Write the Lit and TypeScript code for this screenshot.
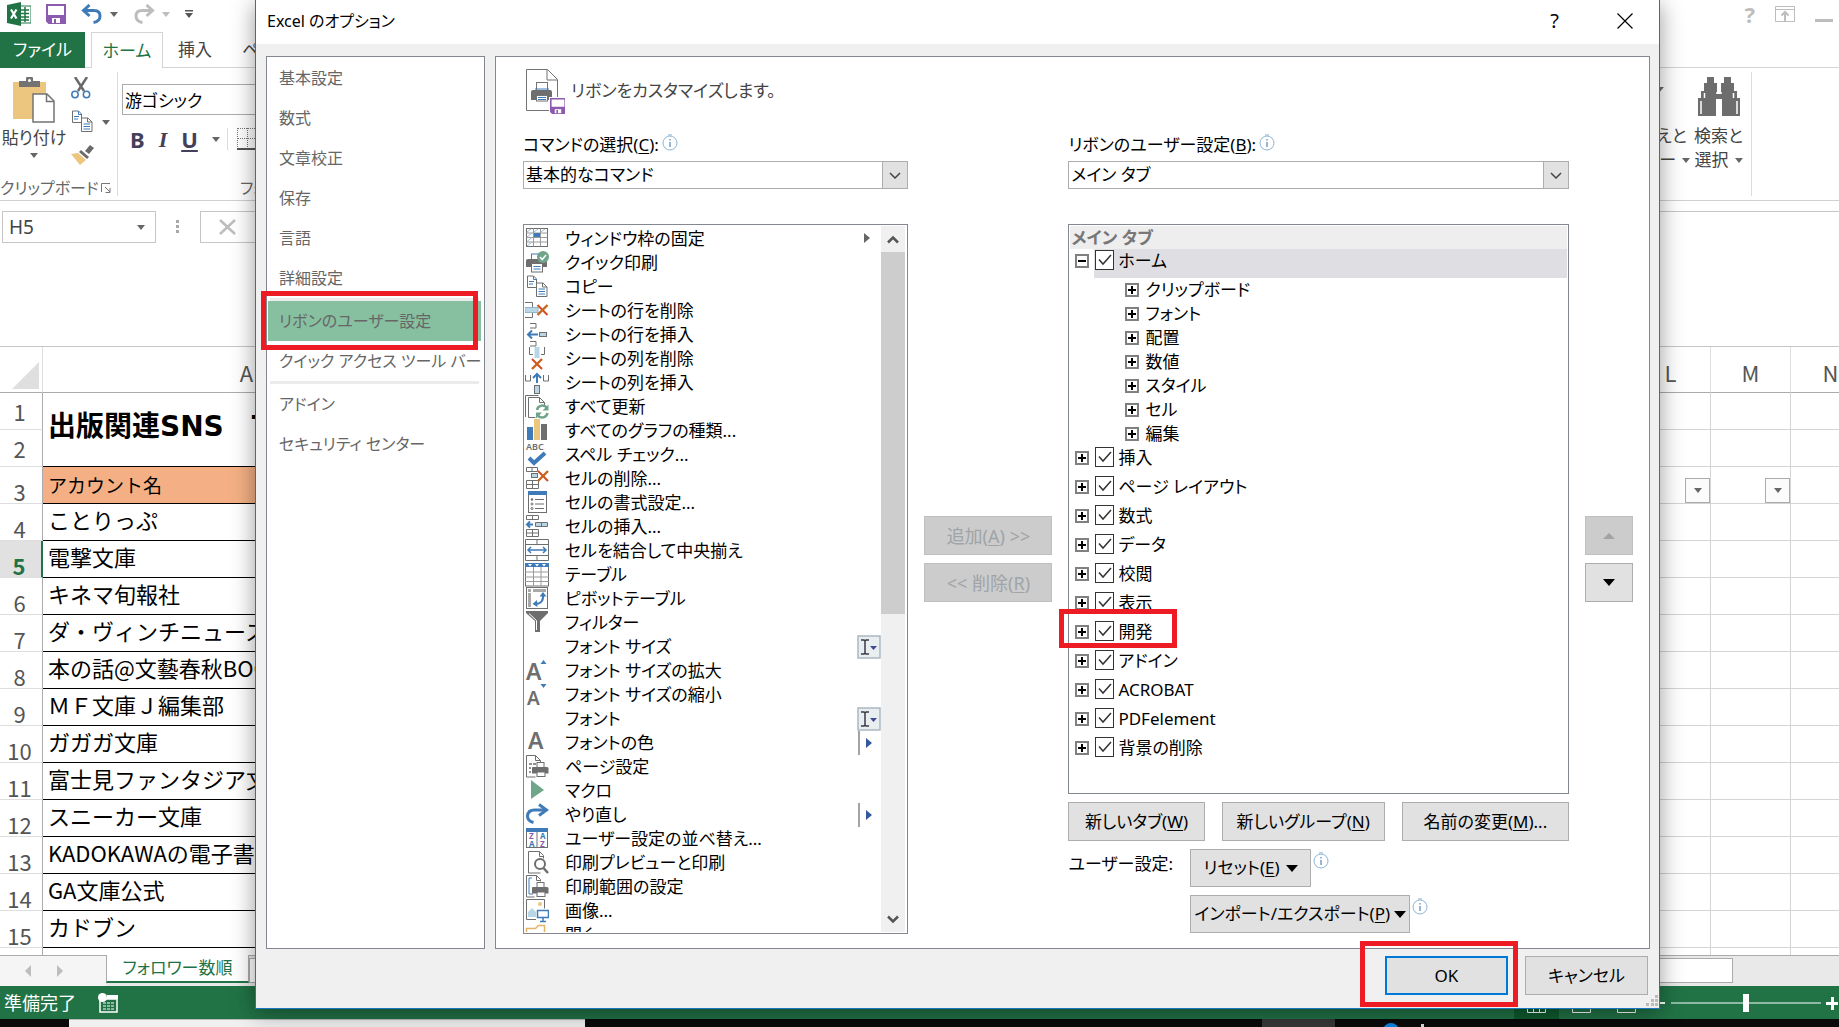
import { LitElement, html, svg, css, nothing } from "lit";
import { customElement } from "lit/decorators.js";
import { classMap } from "lit/directives/class-map.js";

const G = "#6e6e6e";
const B = "#3f7bb8";
const L = "#b9d6e6";
const GREEN = "#6fa58b";

const cross = (x: number, y: number) => svg`
  <path d="M${x} ${y}l10 10" stroke="#d9481c" stroke-width="2" fill="none"/>
  <path d="M${x + 10} ${y}l-10 10" stroke="#c9641c" stroke-width="2.4" fill="none"/>`;

const miniPrinter = svg`
  <rect x="12" y="7.500" width="7" height="5" fill="#fff" stroke="${G}"/>
  <path d="M7 13q0-1 1-1h14q1.500 0 1.500 1.500V18.500H7z" fill="${G}"/>
  <rect x="12" y="17" width="8" height="4.500" fill="#fff" stroke="${G}"/>`;

const twoPages = svg`
  <path d="M2.500 1h6l3 3v8.500h-9z" fill="#fff" stroke="${G}"/>
  <path d="M8.500 1v3.500h3M4 6.500h5M4 9h4" fill="none" stroke="${B}"/>
  <path d="M11.500 8h6.500l4 4v9.500h-10.500z" fill="#fff" stroke="${G}"/>
  <path d="M17.500 8v4h4.500" fill="none" stroke="${G}"/>
  <path d="M13.500 14h6.500M13.500 16.500h6.500M13.500 19h6.500" stroke="${B}"/>`;

const floppy = svg`
  <path d="M1 1h18v18H3l-2-2z" fill="#fff" stroke="#8c5bb0" stroke-width="2"/>
  <path d="M1 11h18v8H3l-2-2z" fill="#8c5bb0"/>
  <rect x="6" y="14" width="8" height="5" fill="#fff"/><rect x="8" y="15" width="2" height="4" fill="#8c5bb0"/>`;

const cmdIcons: Record<string, unknown> = {
  freeze: svg`
    <rect x="1.500" y="1.500" width="21" height="18" fill="#fff" stroke="${G}"/>
    <path d="M1.500 6h21M1.500 10.500h21M1.500 15h21M8.500 1.500v18M15.500 1.500v18" stroke="#9a9a9a"/>
    <path d="M2 5l4-3M9 5l4-3M16 5l4-3M2 10l5-4M2 14.500l5-4M2 19l5-4" stroke="#9ebfd8"/>
    <rect x="9" y="6" width="6" height="4" fill="${B}"/>`,
  quick: svg`
    <rect x="6.500" y="3" width="9" height="6" fill="#fff" stroke="${B}"/>
    <path d="M1 10q0-2 2-2h17q2 0 2 2v6H1z" fill="${G}"/>
    <rect x="6.500" y="12.500" width="11" height="8.500" fill="#fff" stroke="${G}"/>
    <path d="M8.500 15.500h7M8.500 18h7" stroke="${B}"/>
    <circle cx="18" cy="6" r="6" fill="${GREEN}"/><path d="M15 6l2.200 2.500L21 4" fill="none" stroke="#fff" stroke-width="1.500"/>`,
  copy: twoPages,
  rowDel: svg`<path d="M0 3.500h7.500V8M0 18.500h7.500V14" fill="none" stroke="${G}"/>
    <rect x="0" y="8.500" width="13" height="5" fill="${L}" stroke="#8fb6cc"/>${cross(12.5, 6)}`,
  rowIns: svg`<path d="M5 .500h6v4.500H5M5 18.500h6V23H5" fill="none" stroke="${G}"/>
    <path d="M3 11.500h10M7 7.500l-4 4 4 4" fill="none" stroke="${B}" stroke-width="2"/>
    <rect x="14.500" y="9.500" width="7" height="4" fill="${L}" stroke="${G}"/>`,
  colDel: svg`<path d="M4.500 0v7.500H8M19.500 0v7.500H16" fill="none" stroke="${G}"/>
    <rect x="9.500" y="0" width="5" height="11" fill="${L}"/>${cross(7, 12)}`,
  colIns: svg`<path d="M.500 4v6h5V4M18.500 4v6h5V4" fill="none" stroke="${G}"/>
    <path d="M12 12V3M8 7l4-4 4 4" fill="none" stroke="${B}" stroke-width="2"/>
    <rect x="9.500" y="14.500" width="5" height="8" fill="${L}" stroke="${G}"/>`,
  refresh: svg`<path d="M.500 22V.500h13M3.500 22.500V2.500h11l5 5v4M3.500 22.500h7" fill="none" stroke="${G}"/>
    <path d="M14.500 2.500v5h5" fill="none" stroke="${G}"/>
    <path d="M12 15a5.500 5.500 0 0 1 10-2M22.500 18a5.500 5.500 0 0 1-10 2" fill="none" stroke="${GREEN}" stroke-width="2.500"/>
    <path d="M23.500 9.500v6h-6zM11 23.500v-6h6z" fill="${GREEN}"/>`,
  chart: svg`<rect x="2" y="8" width="6" height="13" fill="${B}"/><rect x="9" y="0" width="6" height="21" fill="#ecc57f"/><rect x="16" y="5" width="6" height="16" fill="${G}"/>`,
  spell: svg`<text x="1" y="7" font-size="9" font-weight="600" fill="${G}">ABC</text>
    <path d="M4 15l5 5L20 10" fill="none" stroke="${B}" stroke-width="4"/>`,
  cellDel: svg`<path d="M1.500.500h11v4h-11zM7 .500v4M1.500 13.500h12v8h-12zM7.500 13.500v8M1.500 17.500h12" fill="none" stroke="${G}"/>
    <rect x="6.500" y="6.500" width="6" height="4" fill="${L}" stroke="${G}"/>${cross(13, 4)}`,
  format: svg`<rect x="3.500" y="1" width="18" height="20.500" fill="#fff" stroke="${G}"/><rect x="3" y="0" width="19" height="4" fill="${B}"/>
    <path d="M10 8.500h9M10 13h9M10 17.500h9" stroke="${G}"/>
    <circle cx="7" cy="8.500" r="1.200" fill="${G}"/><circle cx="7" cy="13" r="1" fill="none" stroke="${G}"/><circle cx="7" cy="17.500" r="1" fill="none" stroke="${G}"/>`,
  cellIns: svg`<path d="M1.500.500h12v4h-12zM7.500.500v4M1.500 14.500h12v7h-12zM7.500 14.500v7M1.500 18h12" fill="none" stroke="${G}"/>
    <path d="M2 9.500h6M5 6.500l-3 3 3 3" fill="none" stroke="${B}" stroke-width="2"/>
    <path d="M10.500 7.500h12v4h-12zM16.500 7.500v4" fill="${L}" stroke="${G}"/>`,
  merge: svg`<path d="M.500.500h23v21H.500zM.500 5.500h23M.500 16.500h23M12 .500v5M12 16.500v5" fill="none" stroke="${G}"/>
    <path d="M3 11h18M6 8l-3 3 3 3M18 8l3 3-3 3" fill="none" stroke="${B}" stroke-width="1.500"/>`,
  table: svg`<rect x=".500" y="1" width="23" height="22" fill="#fff" stroke="${G}"/>
    <path d="M8.500 4v19M16 4v19M0 9h24M0 14h24M0 18.500h24" stroke="#9a9a9a"/><rect x="0" y="0" width="24" height="4" fill="${B}"/>
    <path d="M3 1h4l-2 2.500zM10 1h4l-2 2.500zM17 1h4l-2 2.500z" fill="#fff"/>`,
  pivot: svg`<rect x="1.500" y=".500" width="21" height="21" fill="#fff" stroke="${G}"/>
    <path d="M3 3.500h3M8 3.500h13M4.500 6v14" stroke="#a8a8a8" stroke-width="3"/>
    <path d="M10 17q9 0 8-10" fill="none" stroke="${B}" stroke-width="2"/><path d="M14.500 9.500L18 5l3.500 4.500zM12 13l-4.500 4 5 3z" fill="${B}"/>`,
  filter: svg`<path d="M1 0h22v2l-8 8v11H10V10L1 2z" fill="${G}"/><path d="M4 2.500l7.500 7V19" fill="none" stroke="#fff"/>`,
  grow: svg`<text x="1" y="21" font-size="23" font-weight="600" fill="${G}">A</text><path d="M15.500 5l3-4 3 4z" fill="${B}"/>`,
  shrink: svg`<text x="2" y="22" font-size="19" font-weight="600" fill="${G}">A</text><path d="M15.500 1h6l-3 4z" fill="${B}"/>`,
  fcolor: svg`<text x="3" y="18" font-size="23" font-weight="600" fill="${G}">A</text>`,
  page: svg`<path d="M1.500 22V.500h9l5 5v2M1.500 22h9M10.500.500v5h5" fill="none" stroke="${G}"/>
    <path d="M4 9h3M8 9h3M4 13h2M4 17h2" stroke="${G}" stroke-width="1.500"/>${miniPrinter}`,
  macro: svg`<path d="M6 1l13 10L6 20z" fill="${GREEN}"/>`,
  redo: svg`<path d="M20 7H9.500Q3 7 2.500 13q0 5 6 6.500" fill="none" stroke="${B}" stroke-width="3"/><path d="M14 1.500l7.500 5.500L14 12.500" fill="none" stroke="${B}" stroke-width="3"/>`,
  sort: svg`<rect x="1.500" y="2" width="21" height="18.500" fill="#fff" stroke="${G}"/><rect x="1" y="1" width="22" height="4" fill="${B}"/><path d="M12 5v15" stroke="${G}"/>
    <g font-size="8" font-weight="700"><text x="4" y="12" fill="#8c5bb0">Z</text><text x="4" y="19.500" fill="${B}">A</text><text x="15" y="12" fill="${B}">A</text><text x="15" y="19.500" fill="#8c5bb0">Z</text></g>`,
  preview: svg`<path d="M3.500 22V.500h11l4 4v3M3.500 22h12M14.500.500v5h4" fill="none" stroke="${G}"/>
    <circle cx="15" cy="13" r="5" fill="#fff" stroke="${G}" stroke-width="2"/><path d="M18.500 17l4.500 5" stroke="${G}" stroke-width="2.500"/>`,
  area: svg`<path d="M1.500 22V.500h10l4 4v2M1.500 22h8M11.500.500v5h4" fill="none" stroke="${G}"/><path d="M7 3H4v16h4" fill="none" stroke="${B}"/>${miniPrinter}`,
  image: svg`<path d="M11 20.500H1.500V.500h18v9" fill="none" stroke="${G}"/><circle cx="15" cy="5" r="2" fill="#ecc57f"/><path d="M3 18v-5l4-4 4 4v5z" fill="${L}"/>
    <rect x="12.500" y="11.500" width="11" height="7" fill="#fff" stroke="${B}" stroke-width="1.500"/><path d="M18 19v3M15 22.500h6" stroke="${B}" stroke-width="1.500"/>`,
  open: svg`<path d="M1.500 24V5.500h9l3-3h6V24" fill="none" stroke="#e3b566" stroke-width="1.500"/>`,
};

const commands: [string, string, string?][] = [
  ["freeze", "ウィンドウ枠の固定", "sub"], ["quick", "クイック印刷"], ["copy", "コピー"],
  ["rowDel", "シートの行を削除"], ["rowIns", "シートの行を挿入"], ["colDel", "シートの列を削除"], ["colIns", "シートの列を挿入"],
  ["refresh", "すべて更新"], ["chart", "すべてのグラフの種類..."], ["spell", "スペル チェック..."],
  ["cellDel", "セルの削除..."], ["format", "セルの書式設定..."], ["cellIns", "セルの挿入..."],
  ["merge", "セルを結合して中央揃え"], ["table", "テーブル"], ["pivot", "ピボットテーブル"], ["filter", "フィルター"],
  ["", "フォント サイズ", "edit"], ["grow", "フォント サイズの拡大"], ["shrink", "フォント サイズの縮小"],
  ["", "フォント", "edit"], ["fcolor", "フォントの色", "split"], ["page", "ページ設定"], ["macro", "マクロ"],
  ["redo", "やり直し", "split"], ["sort", "ユーザー設定の並べ替え..."], ["preview", "印刷プレビューと印刷"],
  ["area", "印刷範囲の設定"], ["image", "画像..."], ["open", "開く"],
];

const extras: Record<string, unknown> = {
  sub: svg`<path d="M7 6v10l6-5z" fill="#666"/>`,
  edit: svg`<rect x="1" y="1" width="22" height="22" fill="#e9eef1" stroke="#a9b8c4" stroke-width="1.500"/>
    <path d="M4 5h3l1 1 1-1h3M4 19h3l1-1 1 1h3M8 6v12" fill="none" stroke="#3a3a44" stroke-width="1.500"/><path d="M13 11h7l-3.500 4z" fill="#3d4a94"/>`,
  split: svg`<path d="M2 0v24" stroke="#a3a3a3" stroke-width="2"/><path d="M9 7v10l6-5z" fill="#35589c"/>`,
};

const info = html`<svg class="info" width="16" height="18" viewBox="0 0 16 18" aria-hidden="true">
  <circle cx="8" cy="9" r="7" fill="#fff" stroke="#8db4d6"/><path d="M6 1h4" stroke="#a9c9e2" stroke-width="1.500"/>
  <path d="M8 8v5M8 5v1.500" stroke="#2f6aa8"/></svg>`;

const caret = (color = "#666") => html`<svg width="8" height="5" viewBox="0 0 8 5" aria-hidden="true"><path d="M0 0h8L4 5z" fill="${color}"/></svg>`;

@customElement("options-combo")
class OptionsCombo extends LitElement {
  static properties = { value: {}, name: {} };
  declare value: string;
  declare name: string;
  static styles = css`
    :host { display: grid; grid-template-columns: 1fr 26px; height: 28px; }
    select { grid-area: 1 / 1 / 2 / 3; appearance: none; border: 1px solid #adadad; border-radius: 0; background: #fff; margin: 0; padding: 0 28px 0 2px;
      font: 17px/26px "Noto Sans", "Noto Sans CJK JP", sans-serif; font-feature-settings: "palt"; color: #000; min-width: 0; }
    span { grid-area: 1 / 2; display: grid; place-items: center; border: 1px solid #adadad; background: #e1e1e1; pointer-events: none; z-index: 1; }
  `;
  render() {
    return html`<select aria-label=${this.name}><option>${this.value}</option></select>
      <span><svg width="12" height="7" viewBox="0 0 12 7"><path d="M1 1l5 5 5-5" fill="none" stroke="#444" stroke-width="1.500"/></svg></span>`;
  }
}

@customElement("excel-window")
class ExcelWindow extends LitElement {
  static styles = css`
    :host { display: flex; flex-direction: column; height: 100%; background: #fff; font: 17px/24px "Noto Sans", "Noto Sans CJK JP", sans-serif; font-feature-settings: "palt"; color: #444; }
    * { box-sizing: border-box; }
    button { font: inherit; font-feature-settings: inherit; color: inherit; background: none; border: 0; padding: 0; margin: 0; white-space: nowrap; }
    svg { display: block; flex: none; }
    .quick { display: flex; align-items: center; height: 32px; flex: none; padding: 0 6px 4px 7px; gap: 15px; }
    .pair { display: flex; align-items: center; gap: 7px; }
    .sys { margin-left: auto; display: flex; align-items: center; gap: 20px; color: #bdbdbd; font-weight: 700; font-size: 22px; }
    .tabs { display: flex; height: 36px; flex: none; }
    .tabs button { border-bottom: 1px solid #d4d4d4; }
    .tabs .file { width: 85px; background: #217346; color: #fff; border: 0; }
    .tabs .gap { width: 6px; border-bottom: 1px solid #d4d4d4; }
    .tabs .home { width: 72px; border: 1px solid #d4d4d4; border-bottom: 0; color: #217346; }
    .tabs .tab { padding: 0 15px; }
    .tabs .rest { flex: 1; border-bottom: 1px solid #d4d4d4; }
    .ribbon { display: flex; height: 133px; flex: none; padding: 4px 0; border-bottom: 1px solid #d0d0d0; }
    .group { display: flex; flex-direction: column; border-right: 1px solid #dcdcdc; }
    .body { display: flex; flex: 1; }
    .name { display: flex; align-items: center; justify-content: space-between; color: #666; white-space: nowrap; height: 16px; font-size: 16px; line-height: 16px; }
    .clip { width: 118px; padding-right: 6px; }
    .big { display: flex; flex-direction: column; align-items: center; gap: 3px; padding-top: 5px; }
    .clip .big { width: 68px; }
    .small { display: flex; flex-direction: column; gap: 11px; padding: 5px 0 0 3px; }
    .fonts { width: 300px; padding-left: 4px; }
    .fontbox { width: 240px; height: 31px; margin-top: 12px; padding: 0 2px; border: 1px solid #ababab; border-radius: 0; font: inherit; font-feature-settings: inherit; color: #000; }
    .bius { display: flex; align-items: center; gap: 14px; padding: 11px 8px; font-size: 22px; color: #44405a; }
    .bius i { font-family: "Liberation Serif", serif; }
    .fonts .name { padding-left: 118px; }
    .filler { flex: 1; }
    .find { width: 117px; flex-direction: row; gap: 4px; padding-right: 8px; justify-content: flex-end; border-right: 1px solid #dcdcdc; }
    .find button { display: flex; flex-direction: column; align-items: center; padding-top: 5px; }
    .find svg.pic { margin-bottom: 7px; }
    .find .row { display: flex; align-items: center; gap: 6px; }
    .end { width: 87px; flex: none; }
    .formula { display: flex; height: 146px; flex: none; padding-top: 10px; border-bottom: 1px solid #c6c6c6; }
    .namebox { display: flex; align-items: center; justify-content: space-between; width: 154px; height: 32px; margin-left: 2px; padding: 0 10px 0 0; border: 1px solid #c6c6c6; }
    .namebox input { width: 110px; border: 0; padding: 0 6px; font: inherit; font-size: 19px; color: #444; background: none; }
    .dots { margin: 9px 20px 0 20px; }
    .fx { width: 120px; height: 32px; border: 1px solid #c6c6c6; padding: 7px 18px; }
    .fbar { flex: 1; border-top: 1px solid #c6c6c6; }
    .sheet { flex: 1; min-height: 0; overflow: hidden; }
    table { width: calc(100% + 32px); table-layout: fixed; border-collapse: separate; border-spacing: 0; font: 22px/32px "Noto Sans CJK JP", sans-serif; color: #000; }
    th { font-weight: 400; color: #555; padding: 0; }
    thead th { height: 46px; border-bottom: 1px solid #ababab; border-right: 1px solid #dedede; line-height: 39px; padding-top: 6px; }
    thead th.corner { padding: 15px 3px 3px 12px; border-right-color: #dedede; }
    tbody th { height: 37px; line-height: 22px; vertical-align: bottom; padding: 0 3px 1px 0; border-right: 1px solid #ababab; border-bottom: 1px solid #dedede; }
    tbody th.mid { vertical-align: middle; padding-bottom: 0; }
    td { height: 37px; padding: 0; border-right: 1px solid #d4d4d4; border-bottom: 1px solid #d4d4d4; overflow: hidden; white-space: nowrap; }
    td.a { border-bottom-color: #000; padding: 0 5px 6px; line-height: 30px; }
    td.title { font-family: "DejaVu Sans", "Noto Sans CJK JP", sans-serif; font-size: 28px; font-weight: 700; }
    td.headc { background: #f4b084; font-size: 19px; padding-bottom: 0; }
    th.cur { background: #e1e1e1; color: #217346; font-weight: 700; border-right: 2px solid #217346; }
    td .drop { display: grid; place-items: center; width: 25px; height: 25px; margin: 10px 0 0 auto; border: 1px solid #ababab; background: #fbfbfb; }
    .c0 { width: 43px; } .cA { width: 408px; } .cx { width: 80px; }
    .sheets { display: flex; height: 31px; flex: none; background: #e9e9e9; }
    .navs { display: flex; gap: 26px; align-items: center; width: 106px; padding-left: 25px; border-top: 1px solid #ababab; background: #f5f5f5; }
    .active { width: 143px; height: 28px; background: #fff; color: #217346; border: 1px solid #ababab; border-width: 0 1px; border-bottom: 2px solid #217346; }
    .hs { flex: 1; border-top: 1px solid #ababab; display: flex; padding: 2px 106px 3px 0; }
    .hs div { flex: 1; background: #fff; border: 1px solid #ababab; }
    .status { display: flex; align-items: center; height: 33px; flex: none; background: #217346; color: #fff; padding-left: 4px; gap: 22px; font-size: 18px; }
    .tools { margin-left: auto; display: flex; align-items: center; gap: 5px; height: 100%; }
    .views { display: flex; height: 100%; }
    .views span { width: 45px; display: grid; place-items: center; }
    .views .on { background: #0e5c2f; }
    .task { display: flex; height: 8px; flex: none; background: #0a0a0a; overflow: hidden; }
    .search { margin-left: 69px; width: 516px; background: #f0f0f0; border-top: 1px solid #bbb; }
    .run { margin-left: 677px; width: 73px; background: #383838; }
    .dot { margin: 4px 0 0 48px; width: 16px; height: 16px; border-radius: 8px; background: #0a84e0; flex: none; }
    .tick { margin: 5px 0 0 22px; width: 3px; background: #ddd; }
  `;
  private rows = ["ことりっぷ", "電撃文庫", "キネマ旬報社", "ダ・ヴィンチニュース", "本の話@文藝春秋BOOKS", "ＭＦ文庫Ｊ編集部", "ガガガ文庫", "富士見ファンタジア文庫", "スニーカー文庫", "KADOKAWAの電子書籍", "GA文庫公式", "カドブン", "ほんのひきだし"];
  private rest(drop = false) {
    const d = drop ? html`<div class="drop">${caret()}</div>` : nothing;
    return html`<td></td><td>${d}</td><td>${d}</td><td></td>`;
  }
  render() {
    return html`
      <div class="quick">
        <svg width="24" height="24" viewBox="0 0 24 24"><path d="M13 4h11v17H13z" fill="#fff" stroke="#217346"/><path d="M14 8h8M14 11.500h8M14 15h8M14 18h8M18 5v15" stroke="#217346" stroke-width="1.500"/><path d="M0 3l14-3v24L0 21z" fill="#217346"/><path d="M4 7.500l5.500 9M9.500 7.500l-5.500 9" stroke="#fff" stroke-width="2.200"/></svg>
        <svg width="20" height="20" viewBox="0 0 20 20">${floppy}</svg>
        <div class="pair"><svg width="22" height="20" viewBox="0 0 22 20"><path d="M2 6.500h11q6 0 6 5.500t-6.500 6.500" fill="none" stroke="#3f7bb8" stroke-width="3"/><path d="M8.500 1L2.500 6.500 8.500 12" fill="none" stroke="#3f7bb8" stroke-width="3"/></svg>${caret()}</div>
        <div class="pair"><svg width="22" height="20" viewBox="0 0 22 20"><path d="M20 6.500H9q-6 0-6 5.500t6.500 6.500" fill="none" stroke="#bdbdbd" stroke-width="3"/><path d="M13.500 1l6 5.500-6 5.500" fill="none" stroke="#bdbdbd" stroke-width="3"/></svg>${caret("#bdbdbd")}</div>
        <svg width="8" height="8" viewBox="0 0 8 8"><path d="M0 0h8v1.500H0zM0 3h8L4 8z" fill="#555"/></svg>
        <div class="sys"><span>?</span>
          <svg width="20" height="16" viewBox="0 0 20 16"><path d="M.500.500h19v15H.500zM.500 3.500h19" fill="none" stroke="#bdbdbd"/><path d="M10 15V7M6.500 9.500L10 6l3.500 3.500" fill="none" stroke="#bdbdbd" stroke-width="2"/></svg>
          <svg width="18" height="16" viewBox="0 0 18 16"><path d="M0 13h18v3H0z" fill="#bdbdbd"/></svg></div>
      </div>
      <div class="tabs"><button class="file">ファイル</button><span class="gap"></span><button class="home">ホーム</button><button class="tab">挿入</button><button class="tab">ページ レイアウト</button><span class="rest"></span></div>
      <div class="ribbon">
        <div class="group clip">
          <div class="body">
            <button class="big">
              <svg width="42" height="46" viewBox="0 0 42 46"><path d="M0 5h33v37H0z" fill="#ecc57f"/><path d="M6 4h7V1q0-1 1-1h5q1 0 1 1v3h7v6H6z" fill="#737373"/><circle cx="16.500" cy="3.500" r="1.500" fill="#fff"/><path d="M20 17h14l7 7v21H20z" fill="#fff" stroke="#737373" stroke-width="1.500"/><path d="M33.500 17v7.500H41" fill="none" stroke="#737373" stroke-width="1.500"/></svg>
              <span>貼り付け</span>${caret()}
            </button>
            <div class="small">
              <svg width="20" height="22" viewBox="0 0 20 22"><path d="M4 0l9 14M16 0L7 14" stroke="#6a6a6a" stroke-width="2.500"/><circle cx="4" cy="17.500" r="3.200" fill="none" stroke="#3f7bb8" stroke-width="1.500"/><circle cx="15.500" cy="17.500" r="3.200" fill="none" stroke="#3f7bb8" stroke-width="1.500"/></svg>
              <div class="pair"><svg width="24" height="24" viewBox="1 0 24 24">${twoPages}</svg>${caret()}</div>
              <svg width="23" height="20" viewBox="0 0 23 20"><path d="M14 6l5-6 4 3-5 6z" fill="#6a6a6a"/><path d="M10 5l8 7-2 2-8-7z" fill="#6a6a6a"/><path d="M7 8l8 7-6 5L0 9z" fill="#ecc57f"/></svg>
            </div>
          </div>
          <div class="name"><span>クリップボード</span><svg width="10" height="10" viewBox="0 0 10 10"><path d="M.500 9V.500H9M4 4l5 5M9 5v4.500H4.500" fill="none" stroke="#777"/></svg></div>
        </div>
        <div class="group fonts">
          <input class="fontbox" aria-label="フォント" value="游ゴシック">
          <div class="bius"><b>B</b><b><i>I</i></b><b><u>U</u></b><span class="pair">${caret()}<svg width="40" height="22" viewBox="0 0 40 22"><path d="M.500 0v22" stroke="#dcdcdc"/><path d="M11 .500h20M11 10.500h20M10.500 0v20M20.500 0v20" stroke="#777" stroke-dasharray="1 1"/><path d="M10 21h22" stroke="#555" stroke-width="2"/></svg></span></div>
          <span class="filler"></span>
          <div class="name">フォント</div>
        </div>
        <span class="filler"></span>
        <div class="group find">
          <button><svg class="pic" width="40" height="40" viewBox="0 0 40 40"><path d="M0 10h38L24 26v14h-8V26z" fill="#6a6a6a"/></svg><span>並べ替えと</span><span class="row">フィルター ${caret()}</span></button>
          <button><svg class="pic" width="42" height="40" viewBox="0 0 42 40"><path d="M9 0h7v6h3v11h4V6h3V0h7v6h3v8h3v7h3v18H24V22h-6v17H0V21h3v-7h3V6h3z" fill="#6d6d6d"/><path d="M3 24v13M39 24v13M6.500 16v5M35.500 16v5M18 16h6" stroke="#fff" stroke-width="1.500"/></svg><span>検索と</span><span class="row">選択 ${caret()}</span></button>
        </div>
        <span class="end"></span>
      </div>
      <div class="formula">
        <div class="namebox"><input aria-label="名前ボックス" value="H5">${caret()}</div>
        <svg class="dots" width="4" height="14" viewBox="0 0 4 14"><path d="M0 0h3v3H0zM0 5h3v3H0zM0 10h3v3H0z" fill="#a8a8a8"/></svg>
        <div class="fx"><svg width="18" height="16" viewBox="0 0 18 16"><path d="M1 1l15 14M16 1L1 15" stroke="#bdbdbd" stroke-width="2.500"/></svg></div>
        <div class="fbar"></div>
      </div>
      <div class="sheet">
        <table>
          <colgroup><col class="c0"><col class="cA"><col><col class="cx"><col class="cx"><col class="cx"></colgroup>
          <thead><tr><th class="corner"><svg width="27" height="27" viewBox="0 0 27 27"><path d="M27 0v27H0z" fill="#dfdfdf"/></svg></th><th>A</th><th></th><th>L</th><th>M</th><th>N</th></tr></thead>
          <tbody>
            <tr><th class="mid">1</th><td class="a title" rowspan="2">出版関連SNS　Twitter</td>${this.rest()}</tr>
            <tr><th class="mid">2</th>${this.rest()}</tr>
            <tr><th>3</th><td class="a headc">アカウント名</td>${this.rest(true)}</tr>
            ${this.rows.map((r, i) => html`<tr><th class=${classMap({ cur: i === 1 })}>${i + 4}</th><td class="a">${r}</td>${this.rest()}</tr>`)}
          </tbody>
        </table>
      </div>
      <div class="sheets">
        <div class="navs"><svg width="6" height="12" viewBox="0 0 6 12"><path d="M6 0v12L0 6z" fill="#bdbdbd"/></svg><svg width="6" height="12" viewBox="0 0 6 12"><path d="M0 0v12l6-6z" fill="#bdbdbd"/></svg></div>
        <button class="active">フォロワー数順</button>
        <div class="hs"><div></div></div>
      </div>
      <div class="status">
        <span>準備完了</span>
        <svg width="20" height="20" viewBox="0 0 20 20"><path d="M2 6h17v13H2z" fill="none" stroke="#fff" stroke-width="1.500"/><path d="M9 2h11v4H9z" fill="#fff"/><path d="M5 10h12M5 13h12M5 16h12" stroke="#fff" stroke-dasharray="3 1"/><circle cx="4.500" cy="4.500" r="4.500" fill="#fff"/></svg>
        <div class="tools">
          <div class="views"><span class="on"><svg width="19" height="20" viewBox="0 0 19 20"><path d="M.500.500h18v19H.500zM6.500.500v19M12.500.500v19M.500 7h18M.500 13h18" fill="none" stroke="#fff"/></svg></span>
            <span><svg width="19" height="20" viewBox="0 0 19 20"><path d="M.500.500h18v19H.500zM5 5h9v9H5z" fill="none" stroke="#fff"/></svg></span>
            <span><svg width="19" height="20" viewBox="0 0 19 20"><path d="M.500.500h18v19H.500zM.500 9h18" fill="none" stroke="#fff"/></svg></span></div>
          <svg width="185" height="18" viewBox="0 0 185 18"><path d="M2 8h9v2H2z" fill="#fff"/><path d="M17 9h150" stroke="#fff"/><path d="M89 0h6v18h-6z" fill="#fff"/><path d="M172 8h12v3h-12zM177 3h3v13h-3z" fill="#fff"/></svg>
        </div>
      </div>
      <div class="task"><span class="search"></span><span class="run"></span><span class="dot"></span><span class="tick"></span></div>
    `;
  }
}

@customElement("options-dialog")
class OptionsDialog extends LitElement {
  static styles = css`
    :host { display: flex; flex-direction: column; background: #f0f0f0; border: 1px solid #1a78c2; border-top: 0; box-shadow: 0 4px 22px rgba(0, 0, 0, .4);
      font: 17px/24px "Noto Sans", "Noto Sans CJK JP", sans-serif; font-feature-settings: "palt"; color: #000; }
    * { box-sizing: border-box; }
    svg { display: block; flex: none; }
    svg text { font-family: "Noto Sans", sans-serif; }
    button { font: inherit; font-feature-settings: inherit; color: inherit; margin: 0; padding: 0; white-space: nowrap; }
    u { text-underline-offset: 2px; text-decoration-thickness: 1px; }
    .bar { display: flex; align-items: center; height: 44px; flex: none; background: #fff; padding: 0 26px 2px 11px; font-size: 16px; }
    .bar h1 { font: inherit; margin: 0; flex: 1; }
    .bar button { border: 0; background: none; margin-left: 58px; }
    .bar .help { font-size: 20px; }
    .main { flex: 1; display: flex; gap: 10px; padding: 12px 9px 0 10px; min-height: 0; }
    .nav { width: 219px; border: 1px solid #828790; background: #fff; padding: 1px 3px 0 1px; display: flex; flex-direction: column; font-size: 16px; }
    .nav button { height: 40px; flex: none; border: 0; background: none; text-align: left; padding-left: 11px; color: #666; }
    .nav hr { height: 3px; flex: none; margin: 0 2px; border: 0; background: #ebebeb; width: auto; align-self: stretch; }
    .nav .sel { position: relative; background: #87c0a1; }
    .sel::after, .mark::after { content: ""; position: absolute; border: 5px solid #ed1c24; pointer-events: none; z-index: 2; }
    .sel::after { inset: -10px 3px -9px -7px; }
    .pane { flex: 1; border: 1px solid #828790; background: #fff; padding: 10px 16px 14px 27px; display: flex; flex-direction: column; }
    .intro { display: flex; align-items: center; gap: 6px; height: 48px; flex: none; color: #444; }
    .cols { flex: 1; min-height: 0; display: grid; grid-template-columns: 77fr 128px 100fr 48px; column-gap: 16px; padding-top: 14px; }
    .col { display: flex; flex-direction: column; min-height: 0; }
    .label { display: flex; align-items: center; gap: 3px; height: 32px; flex: none; white-space: nowrap; }
    .label .info { margin-bottom: 5px; }
    options-combo { flex: none; margin-bottom: 35px; }
    .list { flex: 1 1 0; min-height: 0; display: flex; border: 1px solid #828790; padding: 1px 2px 1px 1px; }
    .list ul { flex: 1; margin: 0; padding: 1px 0 0; list-style: none; overflow: hidden; }
    .list li { display: flex; height: 24px; white-space: nowrap; }
    .list li span { flex: 1; padding-left: 16px; }
    .scroll { width: 24px; display: flex; flex-direction: column; align-items: center; background: #f0f0f0; }
    .scroll .thumb { width: 24px; flex: 362; background: #cdcdcd; }
    .scroll .track { flex: 292; }
    .scroll button { border: 0; background: none; height: 26px; display: grid; place-items: center; }
    .mid, .side { display: flex; flex-direction: column; justify-content: center; gap: 8px; padding-top: 55px; }
    .mid { font-size: 18px; }
    .btn { height: 39px; background: #e1e1e1; border: 1px solid #adadad; display: inline-flex; align-items: center; justify-content: center; gap: 6px; }
    .btn:disabled { background: #ccc; border-color: #bfbfbf; color: #9fa4a8; }
    .tree { flex: 1 1 0; min-height: 0; border: 1px solid #828790; padding: 1px; }
    .cat { height: 23px; line-height: 23px; background: #eee; color: #777; font-weight: 700; padding-left: 1px; }
    .tab { display: flex; height: 29px; position: relative; padding-left: 5px; }
    .tab .line { display: flex; flex: 1; margin-left: 5px; padding: 1px 0 0 1px; }
    .tab .on { background: #dfdee3; }
    .tab label { display: flex; gap: 4px; line-height: 22px; }
    .pm { width: 14px; height: 14px; border: 2px solid #808080; background: #fff; display: grid; place-items: center; }
    .tab .pm { margin-top: 5px; }
    .chk { display: grid; align-content: start; }
    .chk input { grid-area: 1 / 1; appearance: none; margin: 0; width: 19px; height: 20px; border: 1px solid #333; background: #fff; }
    .chk svg { grid-area: 1 / 1; margin: 4px 0 0 3px; pointer-events: none; }
    .kid { display: flex; align-items: center; gap: 6px; height: 24px; padding-left: 55px; }
    .mark::after { inset: -11px auto 1px -11px; width: 108px; }
    .acts { display: grid; grid-template-columns: 136fr 163fr 167fr; column-gap: 17px; padding-top: 8px; flex: none; }
    .cust { display: grid; grid-template-columns: 122px 1fr; row-gap: 8px; padding: 8px 0 1px; flex: none; line-height: 30px; }
    .cust .label { height: 38px; gap: 2px; }
    .cust .btn { padding: 0 12px; height: 38px; }
    .cust .wide { padding: 0 3px; gap: 4px; }
    .cust .info { margin-bottom: 14px; }
    .foot { display: flex; justify-content: flex-end; gap: 17px; height: 59px; flex: none; padding: 7px 11px 0; position: relative; }
    .foot .btn { width: 123px; }
    .foot .ok { border: 2px solid #0078d7; position: relative; }
    .ok.mark::after { inset: -17px -12px -14px -27px; width: auto; }
    .grip { position: absolute; right: 1px; bottom: 1px; }
  `;
  private pm(open = false) {
    return html`<span class="pm"><svg width="8" height="8" viewBox="0 0 8 8"><path d=${open ? "M0 3h8v2H0z" : "M0 3h8v2H0zM3 0h2v8H3z"} fill="#000"/></svg></span>`;
  }
  private tab(name: string, open = false) {
    return html`<div class=${classMap({ tab: true, mark: name === "開発" })}>${this.pm(open)}
      <div class=${classMap({ line: true, on: open })}><label><span class="chk"><input type="checkbox" checked>
      <svg width="14" height="12" viewBox="0 0 14 12"><path d="M1 5.500l4 4.500L13 1" fill="none" stroke="#333" stroke-width="1.500"/></svg></span>${name}</label></div></div>`;
  }
  render() {
    const nav = (t: string) => html`<button>${t}</button>`;
    const down = html`<svg width="12" height="7" viewBox="0 0 12 7"><path d="M0 0h12L6 7z" fill="#000"/></svg>`;
    return html`
      <div class="bar"><h1>Excel のオプション</h1><button class="help" aria-label="ヘルプ">?</button>
        <button aria-label="閉じる"><svg width="16" height="16" viewBox="0 0 16 16"><path d="M.500.500l15 15M15.500.500l-15 15" stroke="#000" stroke-width="1.200"/></svg></button></div>
      <div class="main">
        <div class="nav">
          ${["基本設定", "数式", "文章校正", "保存", "言語", "詳細設定"].map(nav)}
          <hr><button class="sel">リボンのユーザー設定</button>${nav("クイック アクセス ツール バー")}<hr>
          ${["アドイン", "セキュリティ センター"].map(nav)}
        </div>
        <div class="pane">
          <div class="intro"><svg width="42" height="46" viewBox="0 0 42 46"><path d="M3.500 1.500h21l10 10v31h-31z" fill="#fff" stroke="#737373"/><path d="M24 1.500v10.500h10.500" fill="none" stroke="#737373"/>
            <rect x="13.500" y="14.500" width="11" height="8" fill="#fff" stroke="#737373"/><path d="M12 21h14" stroke="#3f7bb8"/><path d="M8 24q0-2 2-2h17q2 0 2 2v8H8z" fill="#6e6e6e"/><rect x="13.500" y="27.500" width="11" height="5.500" fill="#fff" stroke="#737373"/><path d="M15 29.500h8M15 31.500h8" stroke="#3f7bb8"/>
            <rect x="26" y="29" width="16" height="17" fill="#fff"/><g transform="translate(27 30) scale(.8)">${floppy}</g></svg><span>リボンをカスタマイズします。</span></div>
          <div class="cols">
            <div class="col">
              <div class="label"><span>コマンドの選択(<u>C</u>):</span>${info}</div>
              <options-combo name="コマンドの選択" value="基本的なコマンド"></options-combo>
              <div class="list">
                <ul>${commands.map(([i, t, x]) => html`<li><svg width="24" height="24" viewBox="0 0 24 24">${i ? cmdIcons[i] : nothing}</svg><span>${t}</span>${x ? html`<svg width="24" height="24" viewBox="0 0 24 24">${extras[x]}</svg>` : nothing}</li>`)}</ul>
                <div class="scroll"><button aria-label="上へ"><svg width="12" height="9" viewBox="0 0 12 9"><path d="M1 7.500l5-5 5 5" fill="none" stroke="#555" stroke-width="2.500"/></svg></button><span class="thumb"></span><span class="track"></span>
                  <button aria-label="下へ"><svg width="12" height="9" viewBox="0 0 12 9"><path d="M1 1.500l5 5 5-5" fill="none" stroke="#555" stroke-width="2.500"/></svg></button></div>
              </div>
            </div>
            <div class="mid"><button class="btn" disabled><span>追加(<u>A</u>) &gt;&gt;</span></button><button class="btn" disabled><span>&lt;&lt; 削除(<u>R</u>)</span></button></div>
            <div class="col">
              <div class="label"><span>リボンのユーザー設定(<u>B</u>):</span>${info}</div>
              <options-combo name="リボンのユーザー設定" value="メイン タブ"></options-combo>
              <div class="tree">
                <div class="cat">メイン タブ</div>
                ${this.tab("ホーム", true)}
                ${["クリップボード", "フォント", "配置", "数値", "スタイル", "セル", "編集"].map((k) => html`<div class="kid">${this.pm()}<span>${k}</span></div>`)}
                ${["挿入", "ページ レイアウト", "数式", "データ", "校閲", "表示", "開発", "アドイン", "ACROBAT", "PDFelement", "背景の削除"].map((t) => this.tab(t))}
              </div>
              <div class="acts"><button class="btn"><span>新しいタブ(<u>W</u>)</span></button><button class="btn"><span>新しいグループ(<u>N</u>)</span></button><button class="btn"><span>名前の変更(<u>M</u>)...</span></button></div>
              <div class="cust">
                <span>ユーザー設定:</span><div class="label"><button class="btn"><span>リセット(<u>E</u>)</span>${down}</button>${info}</div>
                <span></span><div class="label"><button class="btn wide"><span>インポート/エクスポート(<u>P</u>)</span>${down}</button>${info}</div>
              </div>
            </div>
            <div class="side"><button class="btn" disabled aria-label="上へ移動"><svg width="12" height="6" viewBox="0 0 12 6"><path d="M0 6h12L6 0z" fill="#a3a3a3"/></svg></button><button class="btn" aria-label="下へ移動">${down}</button></div>
          </div>
        </div>
      </div>
      <div class="foot"><button class="btn ok mark">OK</button><button class="btn">キャンセル</button>
        <svg class="grip" width="12" height="12" viewBox="0 0 12 12"><path d="M9 0h3v3H9zM5 4h3v3H5zM9 4h3v3H9zM0 8h3v3H0zM5 8h3v3H5zM9 8h3v3H9z" fill="#bcbcbc"/></svg></div>
    `;
  }
}

@customElement("app-root")
class AppRoot extends LitElement {
  static styles = css`
    :host { display: block; position: relative; height: 100vh; overflow: hidden; }
    options-dialog { position: absolute; inset: 0 179px 18px 255px; }
  `;
  render() {
    return html`<excel-window></excel-window><options-dialog></options-dialog>`;
  }
}
